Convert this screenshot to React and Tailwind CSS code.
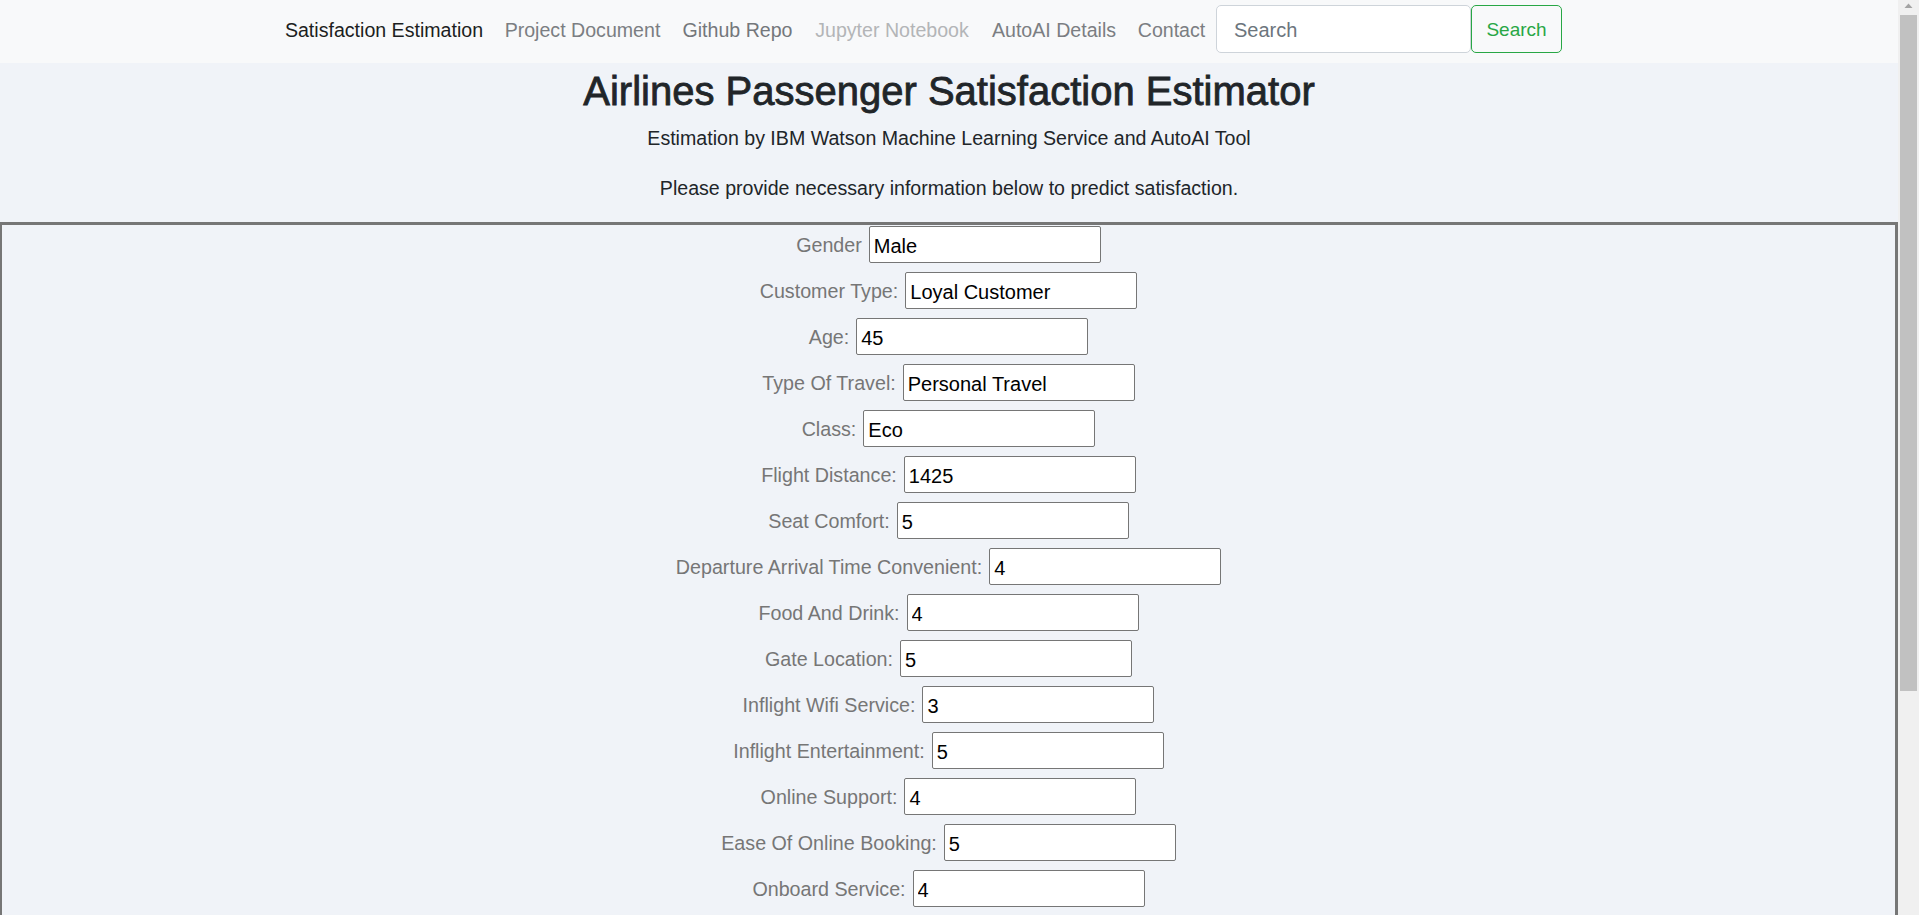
import { useState } from "react";

const NAV = [
  { label: "Satisfaction Estimation", w: "w-[218px]", tone: "text-[#1c1e21]" },
  { label: "Project Document",        w: "w-[179px]", tone: "text-[#7b7e82]" },
  { label: "Github Repo",             w: "w-[131px]", tone: "text-[#74777b]" },
  { label: "Jupyter Notebook",        w: "w-[178px]", tone: "text-[#b3b5b7]" },
  { label: "AutoAI Details",          w: "w-[146px]", tone: "text-[#7b7e82]" },
  { label: "Contact",                 w: "w-[89px]",  tone: "text-[#7b7e82]" },
];

const FIELDS = [
  { label: "Gender",                             value: "Male" },
  { label: "Customer Type:",                     value: "Loyal Customer" },
  { label: "Age:",                               value: "45" },
  { label: "Type Of Travel:",                    value: "Personal Travel" },
  { label: "Class:",                             value: "Eco" },
  { label: "Flight Distance:",                   value: "1425" },
  { label: "Seat Comfort:",                      value: "5" },
  { label: "Departure Arrival Time Convenient:", value: "4" },
  { label: "Food And Drink:",                    value: "4" },
  { label: "Gate Location:",                     value: "5" },
  { label: "Inflight Wifi Service:",             value: "3" },
  { label: "Inflight Entertainment:",            value: "5" },
  { label: "Online Support:",                    value: "4" },
  { label: "Ease Of Online Booking:",            value: "5" },
  { label: "Onboard Service:",                   value: "4" },
];

function Field({ label, value }) {
  const [v, setV] = useState(value);
  return (
    <div className="flex items-center justify-center gap-[7px] h-[37px]">
      <label className="pt-[3px] text-[19.7px] text-[#767676] whitespace-nowrap">{label}</label>
      <input
        value={v}
        onChange={(e) => setV(e.target.value)}
        className="w-[232px] h-[37px] bg-white border border-[#767676] rounded-[2px] pl-[4px] pt-[4px] text-[20px] text-black outline-none"
      />
    </div>
  );
}

export default function App() {
  return (
    <div className="flex h-screen w-full overflow-hidden bg-[#f0f3f8] font-['Liberation_Sans',Arial,sans-serif]">
      <div className="flex-1 min-w-0 flex flex-col">
        {/* Navbar */}
        <nav className="h-[63px] shrink-0 bg-[#f8f9fa]">
          <div className="h-[58px] flex items-center pl-[275px]">
            {NAV.map(({ label, w, tone }) => (
              <a key={label} href="#" className={`${w} ${tone} pt-[4px] text-[19.6px] text-center whitespace-nowrap`}>
                {label}
              </a>
            ))}
            <input
              placeholder="Search"
              className="w-[255px] h-[48px] bg-white border border-[#ced4da] rounded-[5px] px-[17px] pt-[3px] text-[20px] text-[#495057] placeholder:text-[#6c757d] outline-none"
            />
            <button className="w-[91px] h-[48px] border border-[#28a745] rounded-[5px] pt-[3px] text-[19px] text-[#28a745]">
              Search
            </button>
          </div>
        </nav>

        {/* Header */}
        <div className="flex flex-col items-center text-[#212529]">
          <h1 className="mt-[4px] h-[48px] leading-[48px] text-[40px] [-webkit-text-stroke:0.8px_#212529]">
            Airlines Passenger Satisfaction Estimator
          </h1>
          <p className="mt-[8px] h-[30px] leading-[30px] text-[19.6px]">
            Estimation by IBM Watson Machine Learning Service and AutoAI Tool
          </p>
          <p className="mt-[20px] h-[30px] leading-[30px] text-[19.6px]">
            Please provide necessary information below to predict satisfaction.
          </p>
        </div>

        {/* Form box */}
        <div className="mt-[19px] flex-1 border-t-[3px] border-r-[3px] border-l-2 border-[#767676]">
          <div className="pt-[1px] flex flex-col gap-[9px]">
            {FIELDS.map((f) => (
              <Field key={f.label} {...f} />
            ))}
          </div>
        </div>
      </div>

      {/* Scrollbar */}
      <div className="w-[21px] shrink-0 bg-[#f0f0f0] flex flex-col items-center">
        <svg width="21" height="14" viewBox="0 0 21 14" className="shrink-0">
          <path d="M6.5 8 L10.5 3.5 L14.5 8 Z" fill="#a3a3a3" />
        </svg>
        <div className="mt-[1px] w-[17px] h-[676px] bg-[#c1c1c1]" />
      </div>
    </div>
  );
}
